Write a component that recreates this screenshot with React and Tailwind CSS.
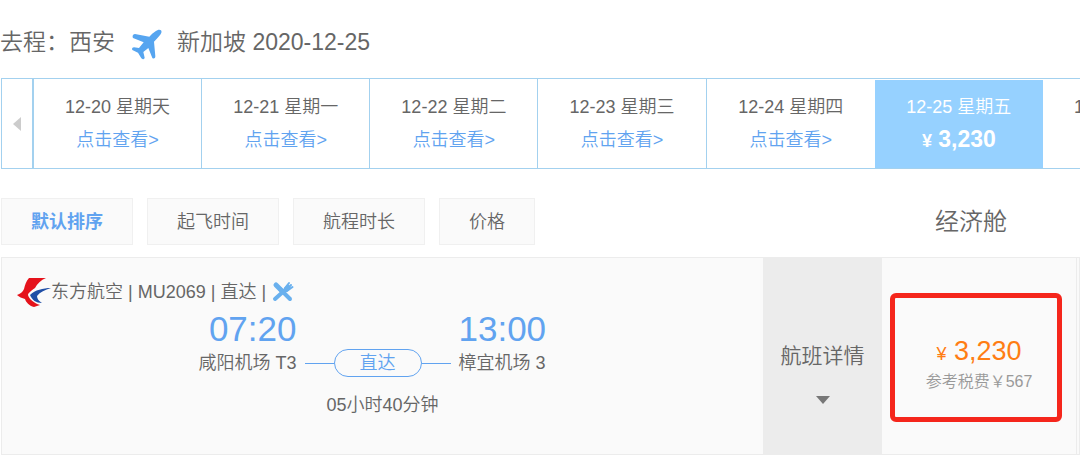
const days = [
  { date: "12-20 星期天" },
  { date: "12-21 星期一" },
  { date: "12-22 星期二" },
  { date: "12-23 星期三" },
  { date: "12-24 星期四" },
  { date: "12-25 星期五", price: "3,230" },
  { date: "12-26 星期六" },
];

const sorts = ["默认排序", "起飞时间", "航程时长", "价格"];

function PlaneIcon() {
  return (
    <svg viewBox="36 24 94 93" className="h-[31px] w-8 shrink-0" aria-hidden="true">
      <path
        fill="#56a5f0"
        d="M125 28C129 34 126 41 104 62L108 106C108 112 103 115 99 111L87 81L72 93L76 110C75 115 69 116 66 112L56 95L39 87C37 83 39 79 44 79L59 81L73 64L41 51C38 46 41 39 47 39L90 47C108 29 118 23 125 28Z"
      />
    </svg>
  );
}

function AirlineLogo() {
  return (
    <svg viewBox="0 0 34 30" className="h-[30px] w-[34px] shrink-0" aria-hidden="true">
      <path
        fill="#e5121b"
        d="M12 1H29C24 3 20 7 18 11C14 14 11 16 11 18C12 22 17 26 23 28L17 30C12 29 9 25 8 22C5 21 2 20 0 18C3 17 6 15 7 12C8 8 9 4 12 1Z"
      />
      <path fill="#1f4ea6" d="M34 11C26 11 18 13 13 18C15 23 19 26 25 26C22 24 20 22 20 19C23 15 28 13 34 11Z" />
    </svg>
  );
}

function MealIcon() {
  return (
    <svg viewBox="0 0 22 22" className="h-[22px] w-[22px] shrink-0" role="img" aria-label="餐食">
      <g fill="none" stroke="#69b0ee" strokeLinecap="round">
        <path strokeWidth="5" d="M4 4L9 9" />
        <path strokeWidth="4" d="M8 8L18 18" />
        <path strokeWidth="4" d="M3 18L13 9" />
        <path strokeWidth="5" d="M14 8.5L16 6.5" />
        <path strokeWidth="2" d="M13 7L17 2M15 8L19 4M15 10L20.5 6" />
      </g>
    </svg>
  );
}

export default function App() {
  return (
    <div className="overflow-hidden bg-white pb-2 font-['Liberation_Sans','Noto_Sans_CJK_SC',sans-serif] text-lg font-[350] text-[#666]">
      <h1 className="flex h-[78px] items-center pt-1.5 text-[23px] leading-8 font-[350]">
        <span>去程：西安</span>
        <span className="mr-3.5 ml-4 flex pt-1">
          <PlaneIcon />
        </span>
        <span>新加坡 2020-12-25</span>
      </h1>

      <nav aria-label="日期" className="ml-px flex h-[91px] overflow-hidden border-y border-l border-[#a3d1ef]">
        <button type="button" aria-label="前一天" className="flex w-8 shrink-0 items-center justify-center border-r-2 border-[#a3d1ef]">
          <svg viewBox="0 0 8 14" className="h-3.5 w-2" aria-hidden="true">
            <path fill="#ccc" d="M8 0V14L0 7Z" />
          </svg>
        </button>
        {days.map((day) => (
          <a
            key={day.date}
            href="#"
            className={
              day.price
                ? "mt-px -mb-px flex w-[15.6%] shrink-0 flex-col items-center bg-[#96d1ff] pt-[11px] text-white"
                : "flex w-[15.6%] shrink-0 flex-col items-center border-r border-[#a3d1ef] pt-3 nth-[6]:border-r-0"
            }
          >
            <span className="leading-8 whitespace-nowrap">{day.date}</span>
            {day.price ? (
              <span className="text-[23px] leading-8 font-bold whitespace-nowrap">
                <span className="text-lg">¥</span> {day.price}
              </span>
            ) : (
              <span className="leading-[34px] whitespace-nowrap text-[#61a3f0]">点击查看&gt;</span>
            )}
          </a>
        ))}
      </nav>

      <div className="mt-[29px] ml-px flex items-center">
        <div className="flex flex-1 gap-3.5">
          {sorts.map((label, i) => (
            <button
              key={label}
              type="button"
              className={
                i === 0
                  ? "h-[47px] border border-[#f0f0f0] bg-[#fafafa] px-[29px] font-bold text-[#61a3f0]"
                  : "h-[47px] border border-[#f0f0f0] bg-[#fafafa] px-[29px]"
              }
            >
              {label}
            </button>
          ))}
        </div>
        <div className="w-[218px] text-center text-2xl">经济舱</div>
      </div>

      <section className="mt-3 ml-px flex h-[198px] border-y border-l border-[#ececec] bg-[#fafafa]">
        <div className="flex-1 pt-[18px]">
          <div className="flex items-center pl-[15px] leading-8">
            <AirlineLogo />
            <span className="whitespace-nowrap">东方航空 | MU2069 | 直达 |</span>
            <span className="ml-1.5">
              <MealIcon />
            </span>
          </div>
          <div className="grid grid-cols-[1fr_auto_1fr] gap-x-2 pt-px pr-2.5">
            <div className="text-right">
              <div className="text-[35px] leading-10 text-[#61a3f0]">07:20</div>
              <div className="leading-7">咸阳机场 T3</div>
            </div>
            <div className="flex items-center self-end">
              <span className="h-px w-[29px] bg-[#61a3f0]" />
              <span className="flex h-7 w-22 items-center justify-center rounded-full border border-[#61a3f0] text-[#61a3f0]">直达</span>
              <span className="h-px w-[29px] bg-[#61a3f0]" />
            </div>
            <div>
              <div className="text-[35px] leading-10 text-[#61a3f0]">13:00</div>
              <div className="leading-7">樟宜机场 3</div>
            </div>
          </div>
          <div className="mt-3 text-center leading-8">05小时40分钟</div>
        </div>

        <button type="button" className="flex w-[119px] flex-col items-center bg-[#ececec] pt-[82px] text-[21px] leading-8">
          航班详情
          <svg viewBox="0 0 14 8" className="mt-6 h-2 w-3.5" aria-hidden="true">
            <path fill="#777" d="M0 0H14L7 8Z" />
          </svg>
        </button>

        <div className="relative w-[195px] border-r border-[#ececec] pt-[77px] text-center">
          <div className="text-[27px] leading-8 text-[#ff7d13]">
            <span className="text-lg">¥</span> 3,230
          </div>
          <div className="text-base leading-7 text-[#999]">参考税费￥567</div>
          <div className="absolute top-[35px] right-3.5 bottom-8 left-2 rounded-md border-[5px] border-[#f5261c]" />
        </div>
        <div className="ml-0.5 w-px bg-[#ececec]" />
      </section>
    </div>
  );
}
